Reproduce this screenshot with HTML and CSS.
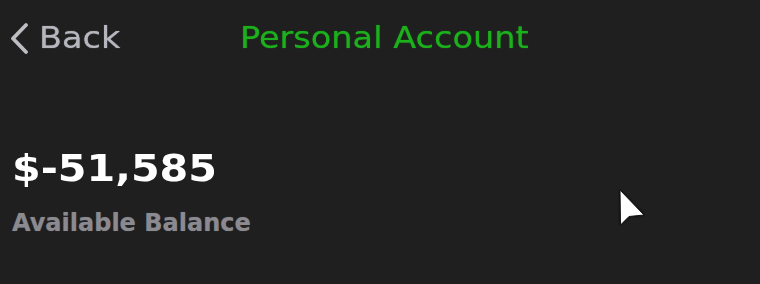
FILE: index.html
```html
<!DOCTYPE html>
<html>
<head>
<meta charset="utf-8">
<link rel="stylesheet" href="styles.css">
</head>
<body>
<div class="screen">
  <header class="navbar">
    <a class="back" href="#">
      <svg class="chevron" width="22" height="32" viewBox="0 0 22 32"><path d="M18 3 L5 16.5 L18 30" fill="none" stroke="#bdbdc2" stroke-width="3.8" stroke-linecap="round" stroke-linejoin="round"/></svg>
      <span class="back-label">Back</span>
    </a>
    <h1 class="title">Personal Account</h1>
    <div class="spacer"></div>
  </header>
  <section class="balance">
    <div class="amount">$-51,585</div>
    <div class="caption">Available Balance</div>
  </section>
  <svg class="cursor" width="40" height="46" viewBox="0 0 40 46">
    <defs>
      <filter id="sh" x="-50%" y="-50%" width="200%" height="200%">
        <feGaussianBlur stdDeviation="1.6"/>
      </filter>
    </defs>
    <path d="M8 6 L8.5 41 L17 32.5 L32 31 Z" fill="#000" opacity="0.9" filter="url(#sh)"/>
    <path d="M8 6 L8.5 41 L17 32.5 L32 31 Z" fill="#fff" stroke="#111" stroke-width="1" stroke-linejoin="round"/>
  </svg>
</div>
</body>
</html>
```
FILE: styles.css
```css
html, body {
  margin: 0;
  padding: 0;
  background: #1f1f1f;
}
.screen {
  position: relative;
  width: 760px;
  height: 284px;
  overflow: hidden;
  background: #1f1f1f;
  font-family: "DejaVu Sans", Verdana, sans-serif;
}
.navbar {
  display: grid;
  grid-template-columns: 1fr auto 1fr;
  align-items: center;
  height: 76px;
  padding: 0 0 0 8px;
}
.back {
  display: flex;
  align-items: center;
  gap: 9px;
  text-decoration: none;
  color: #b6b6be;
}
.chevron {
  display: block;
  margin-top: -1px;
}
.back-label {
  display: inline-block;
  font-size: 30.5px;
  line-height: 1;
  transform: scaleX(1.1);
  transform-origin: left center;
  text-shadow: 0 0 1px rgba(182, 182, 190, 0.7);
}
.title {
  margin: 0;
  font-size: 30.5px;
  font-weight: normal;
  line-height: 1;
  color: #1cb01c;
  transform: scaleX(1.1);
  transform-origin: center;
  text-shadow: 0 0 1px rgba(28, 176, 28, 0.8);
}
.balance {
  display: flex;
  flex-direction: column;
  align-items: flex-start;
  gap: 23px;
  margin-top: 74px;
  padding-left: 12px;
}
.amount {
  font-size: 37.5px;
  font-weight: bold;
  line-height: 1;
  color: #ffffff;
  transform: scaleX(1.1);
  transform-origin: left center;
}
.caption {
  font-size: 24px;
  font-weight: bold;
  line-height: 1;
  color: #8a8a90;
  text-shadow: 0 0 1px rgba(138, 138, 144, 0.5);
}
.cursor {
  position: absolute;
  left: 612px;
  top: 184px;
}
```
